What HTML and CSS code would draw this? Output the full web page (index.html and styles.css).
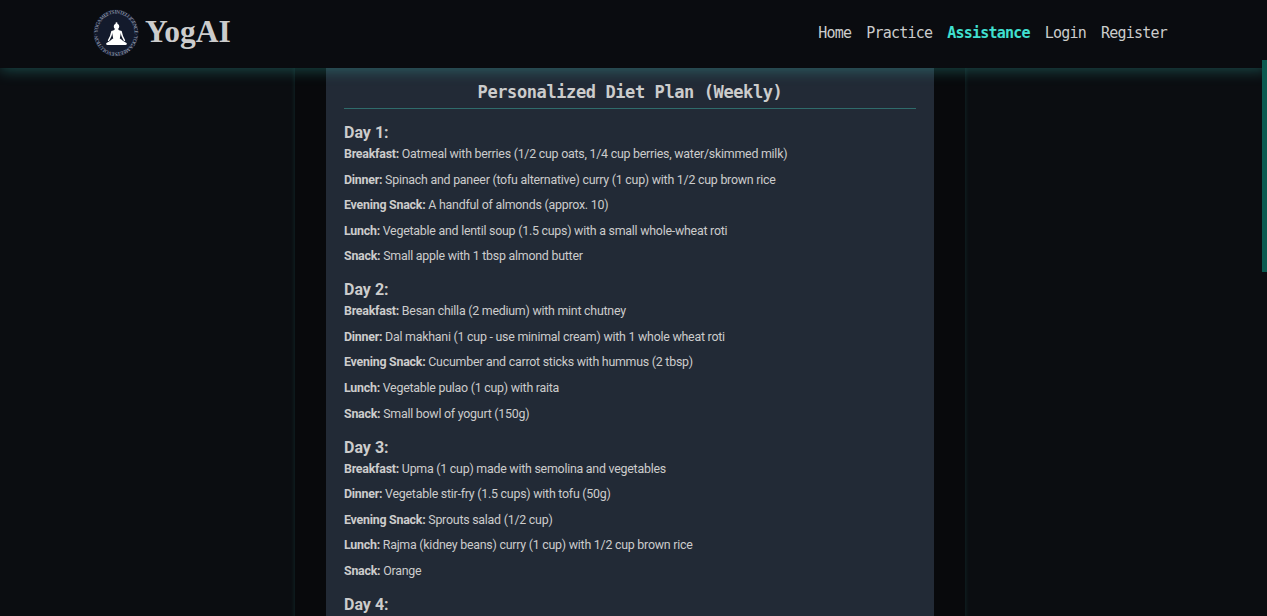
FILE: index.html
```html
<!DOCTYPE html>
<html lang="en">
<head>
<meta charset="utf-8">
<title>YogAI</title>
<link rel="stylesheet" href="styles.css">
</head>
<body>
<header class="topbar">
  <a class="brand" href="#">
    <svg class="brand-logo" viewBox="0 0 46 50" width="46" height="50" aria-hidden="true">
      <defs><path id="ring" d="M4.500 25 a18.500 19.500 0 1 1 37 0 a18.500 19.500 0 1 1 -37 0"/></defs>
      <ellipse cx="23" cy="25" rx="22.500" ry="23.500" fill="#131a2c"/>
      <text class="ring-text"><textPath href="#ring" textLength="118">YOGA MEETS INTELLIGENCE · YOGA MEETS EVOLUTION ·</textPath></text>
      <g fill="#fff">
        <circle cx="23.500" cy="18.500" r="2.700"/>
        <circle cx="23.500" cy="15.200" r="1"/>
        <path d="M21.800 20.800h3.400l.4 1.200 2.600 1-1.500 8h-6.400l-1.500-8 2.600-1z"/>
        <path d="M23.500 30c3.200 0 5 1.200 6.300 2.700l3.700 2.300c.8.800.3 2-1 2H14.500c-1.300 0-1.800-1.200-1-2l3.700-2.300c1.300-1.500 3.100-2.700 6.300-2.700z"/>
      </g>
      <path class="arm" d="M19 23.500c-.6 3.500-1.600 6-3.400 8.800M28 23.500c.6 3.500 1.600 6 3.400 8.800"/>
    </svg>
    <span class="brand-name">YogAI</span>
  </a>
  <nav class="nav">
    <a href="#">Home</a>
    <a href="#">Practice</a>
    <a href="#" class="active">Assistance</a>
    <a href="#">Login</a>
    <a href="#">Register</a>
  </nav>
</header>
<main class="page">
  <div class="column">
    <section class="card">
      <h1 class="title">Personalized Diet Plan (Weekly)</h1>
      <article class="day">
        <h2>Day 1:</h2>
        <p><b>Breakfast:</b> Oatmeal with berries (1/2 cup oats, 1/4 cup berries, water/skimmed milk)</p>
        <p><b>Dinner:</b> Spinach and paneer (tofu alternative) curry (1 cup) with 1/2 cup brown rice</p>
        <p><b>Evening Snack:</b> A handful of almonds (approx. 10)</p>
        <p><b>Lunch:</b> Vegetable and lentil soup (1.5 cups) with a small whole-wheat roti</p>
        <p><b>Snack:</b> Small apple with 1 tbsp almond butter</p>
      </article>
      <article class="day">
        <h2>Day 2:</h2>
        <p><b>Breakfast:</b> Besan chilla (2 medium) with mint chutney</p>
        <p><b>Dinner:</b> Dal makhani (1 cup - use minimal cream) with 1 whole wheat roti</p>
        <p><b>Evening Snack:</b> Cucumber and carrot sticks with hummus (2 tbsp)</p>
        <p><b>Lunch:</b> Vegetable pulao (1 cup) with raita</p>
        <p><b>Snack:</b> Small bowl of yogurt (150g)</p>
      </article>
      <article class="day">
        <h2>Day 3:</h2>
        <p><b>Breakfast:</b> Upma (1 cup) made with semolina and vegetables</p>
        <p><b>Dinner:</b> Vegetable stir-fry (1.5 cups) with tofu (50g)</p>
        <p><b>Evening Snack:</b> Sprouts salad (1/2 cup)</p>
        <p><b>Lunch:</b> Rajma (kidney beans) curry (1 cup) with 1/2 cup brown rice</p>
        <p><b>Snack:</b> Orange</p>
      </article>
      <article class="day">
        <h2>Day 4:</h2>
      </article>
    </section>
  </div>
</main>
<div class="scroll-thumb"></div>
</body>
</html>
```
FILE: styles.css
```css
* { box-sizing: border-box; }
html, body { height: 100%; }
body {
  margin: 0;
  height: 616px;
  overflow: hidden;
  background: #0b0d11;
  font-family: Roboto, Lato, sans-serif;
  color: #cccccc;
}
.topbar {
  position: relative;
  z-index: 2;
  height: 68px;
  padding: 0 100px 0 93px;
  display: flex;
  align-items: center;
  justify-content: space-between;
  background: #0a0c10;
  box-shadow: 0 2px 14px rgba(64, 224, 208, 0.3);
}
.brand {
  display: flex;
  align-items: center;
  gap: 6px;
  text-decoration: none;
  margin-top: -3px;
}
.brand-logo { display: block; }
.ring-text { font: 5.200px "Liberation Serif", serif; fill: #aeb6c6; }
.arm { fill: none; stroke: #fff; stroke-width: 1.500; stroke-linecap: round; }
.brand-name {
  font: bold 31.500px "Liberation Serif", serif;
  padding-bottom: 2px;
  color: #cccccc;
}
.nav { display: flex; gap: 15px; margin: -3px 0 0; }
.nav a {
  font: 15px "DejaVu Sans Mono", monospace;
  letter-spacing: -0.78px;
  color: #cccccc;
  text-decoration: none;
}
.nav a.active { color: #40e0d0; font-weight: bold; }
.page { display: flex; justify-content: center; padding-right: 7px; }
.column {
  width: 670px;
  padding: 0 31px;
  background: #08090c;
  box-shadow: 0 0 5px rgba(64, 224, 208, 0.14);
}
.card {
  background: #222a36;
  padding: 12px 18px;
}
.title {
  margin: 0 0 15px;
  padding-bottom: 4px;
  border-bottom: 1px solid #2f6b6b;
  text-align: center;
  font: bold 17px/24px "DejaVu Sans Mono", monospace;
  letter-spacing: -0.4px;
  color: #cccccc;
}
.day { margin-bottom: 12.300px; }
.day h2 {
  margin: 0;
  font-size: 16px;
  line-height: 17px;
  font-weight: 700;
  color: #cccccc;
}
.day p {
  margin: 0;
  font-size: 12.400px;
  letter-spacing: -0.24px;
  line-height: 25.600px;
  color: #cccccc;
}
.day b { font-weight: 700; }
.scroll-thumb {
  position: fixed;
  top: 60px;
  right: 0;
  width: 5px;
  height: 212px;
  background: #0b5a50;
  z-index: 3;
}
```
